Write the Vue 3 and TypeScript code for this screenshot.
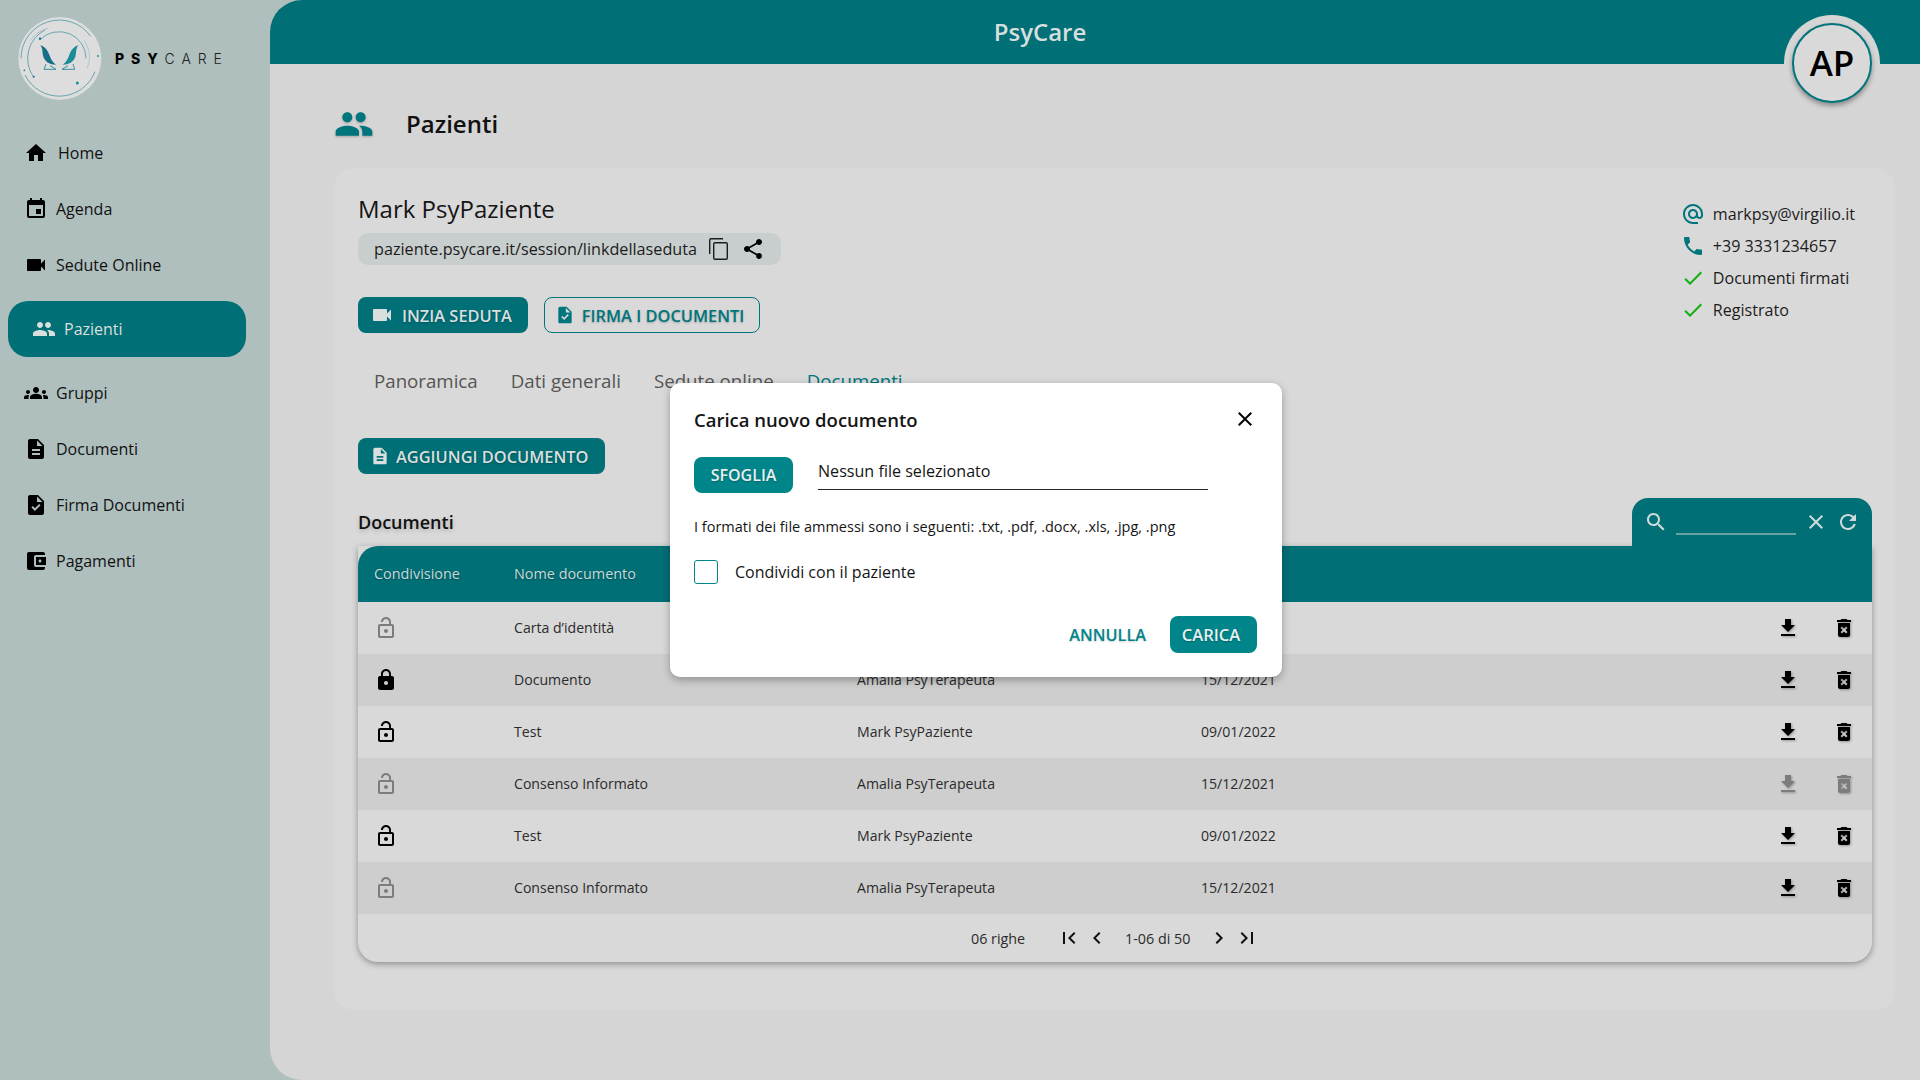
<script setup lang="ts">
const icons = {
  home: 'M10 20v-6h4v6h5v-8h3L12 3 2 12h3v8z',
  event: 'M17 12h-5v5h5v-5zM16 1v2H8V1H6v2H5c-1.11 0-1.99.9-1.99 2L3 19c0 1.1.89 2 2 2h14c1.1 0 2-.9 2-2V5c0-1.1-.9-2-2-2h-1V1h-2zm3 18H5V8h14v11z',
  video: 'M17 10.5V7c0-.55-.45-1-1-1H4c-.55 0-1 .45-1 1v10c0 .55.45 1 1 1h12c.55 0 1-.45 1-1v-3.5l4 4v-11l-4 4z',
  people: 'M16 11c1.66 0 2.99-1.34 2.99-3S17.66 5 16 5c-1.66 0-3 1.34-3 3s1.34 3 3 3zm-8 0c1.66 0 2.99-1.34 2.99-3S9.66 5 8 5C6.34 5 5 6.34 5 8s1.34 3 3 3zm0 2c-2.33 0-7 1.17-7 3.5V19h14v-2.5c0-2.33-4.67-3.5-7-3.5zm8 0c-.29 0-.62.02-.97.05 1.16.84 1.97 1.97 1.97 3.45V19h6v-2.5c0-2.33-4.67-3.5-7-3.5z',
  groups: 'M12 12.75c1.63 0 3.07.39 4.24.9 1.08.48 1.76 1.56 1.76 2.73V18H6v-1.61c0-1.18.68-2.26 1.76-2.73 1.17-.52 2.61-.91 4.24-.91zM4 13c1.1 0 2-.9 2-2s-.9-2-2-2-2 .9-2 2 .9 2 2 2zm1.13 1.1c-.37-.06-.74-.1-1.13-.1-.99 0-1.93.21-2.78.58C.48 14.9 0 15.62 0 16.43V18h4.5v-1.61c0-.83.23-1.61.63-2.29zM20 13c1.1 0 2-.9 2-2s-.9-2-2-2-2 .9-2 2 .9 2 2 2zm4 3.43c0-.81-.48-1.53-1.22-1.85-.85-.37-1.79-.58-2.78-.58-.39 0-.76.04-1.13.1.4.68.63 1.46.63 2.29V18H24v-1.57zM12 6c1.66 0 3 1.34 3 3s-1.34 3-3 3-3-1.34-3-3 1.34-3 3-3z',
  doc: 'M14 2H6c-1.1 0-1.99.9-1.99 2L4 20c0 1.1.89 2 1.99 2H18c1.1 0 2-.9 2-2V8l-6-6zm2 16H8v-2h8v2zm0-4H8v-2h8v2zm-3-5V3.5L18.5 9H13z',
  task: 'M14 2H6c-1.1 0-1.99.9-1.99 2L4 20c0 1.1.89 2 1.99 2H18c1.1 0 2-.9 2-2V8l-6-6zm-3.06 16L7.4 14.46l1.41-1.41 2.12 2.12 4.24-4.24 1.41 1.41L10.94 18zM13 9V3.5L18.5 9H13z',
  wallet: 'M21 18v1c0 1.1-.9 2-2 2H5c-1.11 0-2-.9-2-2V5c0-1.1.89-2 2-2h14c1.1 0 2 .9 2 2v1h-9c-1.11 0-2 .9-2 2v8c0 1.1.89 2 2 2h9zm-9-2h10V8H12v8zm4-2.5c-.83 0-1.5-.67-1.5-1.5s.67-1.5 1.5-1.5 1.5.67 1.5 1.5-.67 1.5-1.5 1.5z',
  copy: 'M16 1H4a2 2 0 0 0-2 2v14h1.4V3a.6.6 0 0 1 .6-.6h12zM19 5H8a2 2 0 0 0-2 2v14a2 2 0 0 0 2 2h11a2 2 0 0 0 2-2V7a2 2 0 0 0-2-2zm.6 16a.6.6 0 0 1-.6.6H8a.6.6 0 0 1-.6-.6V7a.6.6 0 0 1 .6-.6h11a.6.6 0 0 1 .6.6z',
  share: 'M18 16.08c-.76 0-1.44.3-1.96.77L8.91 12.7c.05-.23.09-.46.09-.7s-.04-.47-.09-.7l7.05-4.11c.54.5 1.25.81 2.04.81 1.66 0 3-1.34 3-3s-1.34-3-3-3-3 1.34-3 3c0 .24.04.47.09.7L8.04 9.81C7.5 9.31 6.79 9 6 9c-1.66 0-3 1.34-3 3s1.34 3 3 3c.79 0 1.5-.31 2.04-.81l7.12 4.16c-.05.21-.08.43-.08.65 0 1.61 1.31 2.92 2.92 2.92 1.61 0 2.92-1.31 2.92-2.92s-1.31-2.92-2.92-2.92z',
  at: 'M12 2C6.48 2 2 6.48 2 12s4.48 10 10 10h5v-2h-5c-4.34 0-8-3.66-8-8s3.66-8 8-8 8 3.66 8 8v1.43c0 .79-.71 1.57-1.5 1.57s-1.5-.78-1.5-1.57V12c0-2.76-2.24-5-5-5s-5 2.24-5 5 2.24 5 5 5c1.38 0 2.64-.56 3.54-1.47.65.89 1.77 1.47 2.96 1.47 1.97 0 3.5-1.6 3.5-3.57V12c0-5.52-4.48-10-10-10zm0 13c-1.66 0-3-1.34-3-3s1.34-3 3-3 3 1.34 3 3-1.34 3-3 3z',
  phone: 'M6.62 10.79c1.44 2.83 3.76 5.14 6.59 6.59l2.2-2.2c.27-.27.67-.36 1.02-.24 1.12.37 2.33.57 3.57.57.55 0 1 .45 1 1V20c0 .55-.45 1-1 1-9.39 0-17-7.61-17-17 0-.55.45-1 1-1h3.5c.55 0 1 .45 1 1 0 1.25.2 2.45.57 3.57.11.35.03.74-.25 1.02l-2.2 2.2z',
  check: 'M9 16.17 4.83 12l-1.42 1.41L9 19 21 7l-1.41-1.41z',
  lockOpen: 'M12 17c1.1 0 2-.9 2-2s-.9-2-2-2-2 .9-2 2 .9 2 2 2zm6-9h-1V6c0-2.76-2.24-5-5-5S7 3.24 7 6h1.9c0-1.71 1.39-3.1 3.1-3.1 1.71 0 3.1 1.39 3.1 3.1v2H6c-1.1 0-2 .9-2 2v10c0 1.1.9 2 2 2h12c1.1 0 2-.9 2-2V10c0-1.1-.9-2-2-2zm0 12H6V10h12v10z',
  lock: 'M18 8h-1V6c0-2.76-2.24-5-5-5S7 3.24 7 6v2H6c-1.1 0-2 .9-2 2v10c0 1.1.9 2 2 2h12c1.1 0 2-.9 2-2V10c0-1.1-.9-2-2-2zm-6 9c-1.1 0-2-.9-2-2s.9-2 2-2 2 .9 2 2-.9 2-2 2zm3.1-9H8.9V6c0-1.71 1.39-3.1 3.1-3.1 1.71 0 3.1 1.39 3.1 3.1v2z',
  download: 'M19 9h-4V3H9v6H5l7 7 7-7zM5 18v2h14v-2H5z',
  trash: 'M6 19c0 1.1.9 2 2 2h8c1.1 0 2-.9 2-2V7H6v12zm2.46-7.12 1.41-1.41L12 12.59l2.12-2.12 1.41 1.41L13.41 14l2.12 2.12-1.41 1.41L12 15.41l-2.12 2.12-1.41-1.41L10.59 14l-2.13-2.12zM15.5 4l-1-1h-5l-1 1H5v2h14V4z',
  search: 'M15.5 14h-.79l-.28-.27C15.41 12.59 16 11.11 16 9.5 16 5.91 13.09 3 9.5 3S3 5.91 3 9.5 5.91 16 9.5 16c1.61 0 3.09-.59 4.23-1.57l.27.28v.79l5 4.99L20.49 19l-4.99-5zm-6 0C7.01 14 5 11.99 5 9.5S7.01 5 9.5 5 14 7.01 14 9.5 11.99 14 9.5 14z',
  close: 'M19 6.41 17.59 5 12 10.59 6.41 5 5 6.41 10.59 12 5 17.59 6.41 19 12 13.41 17.59 19 19 17.59 13.41 12z',
  refresh: 'M17.65 6.35C16.2 4.9 14.21 4 12 4c-4.42 0-7.99 3.58-7.99 8s3.57 8 7.99 8c3.73 0 6.84-2.55 7.73-6h-2.08c-.82 2.33-3.04 4-5.65 4-3.31 0-6-2.69-6-6s2.69-6 6-6c1.66 0 3.14.69 4.22 1.78L13 11h7V4l-2.35 2.35z',
  first: 'M18.41 16.59 13.82 12l4.59-4.59L17 6l-6 6 6 6zM6 6h2v12H6z',
  prev: 'M15.41 7.41 14 6l-6 6 6 6 1.41-1.41L10.83 12z',
  next: 'M10 6 8.59 7.41 13.17 12l-4.58 4.59L10 18l6-6z',
  last: 'M5.59 7.41 10.18 12l-4.59 4.59L7 18l6-6-6-6zM16 6h2v12h-2z',
}

const navItems = [
  { label: 'Home', icon: icons.home },
  { label: 'Agenda', icon: icons.event },
  { label: 'Sedute Online', icon: icons.video },
  { label: 'Pazienti', icon: icons.people, active: true },
  { label: 'Gruppi', icon: icons.groups },
  { label: 'Documenti', icon: icons.doc },
  { label: 'Firma Documenti', icon: icons.task },
  { label: 'Pagamenti', icon: icons.wallet },
]

const contacts = [
  { text: 'markpsy@virgilio.it', icon: icons.at, ok: false },
  { text: '+39 3331234657', icon: icons.phone, ok: false },
  { text: 'Documenti firmati', icon: icons.check, ok: true },
  { text: 'Registrato', icon: icons.check, ok: true },
]

const tabs = ['Panoramica', 'Dati generali', 'Sedute online', 'Documenti']

const rows = [
  { name: 'Carta d’identità', owner: 'Amalia PsyTerapeuta', date: '15/12/2021', lock: 'open-off' },
  { name: 'Documento', owner: 'Amalia PsyTerapeuta', date: '15/12/2021', lock: 'closed' },
  { name: 'Test', owner: 'Mark PsyPaziente', date: '09/01/2022', lock: 'open' },
  { name: 'Consenso Informato', owner: 'Amalia PsyTerapeuta', date: '15/12/2021', lock: 'open-off', off: true },
  { name: 'Test', owner: 'Mark PsyPaziente', date: '09/01/2022', lock: 'open' },
  { name: 'Consenso Informato', owner: 'Amalia PsyTerapeuta', date: '15/12/2021', lock: 'open-off' },
]
</script>

<template>
  <div class="shell">
    <aside class="sidebar">
      <div class="brand">
        <svg class="brand-mark" viewBox="54 51 252 252">
          <circle cx="179.5" cy="175.5" r="124.5" fill="#dddddd" />
          <g fill="none" stroke="#2c8a9c" stroke-width="2">
            <path d="M63 175A115 115 0 0 1 272 109" />
            <path d="M75 225A115 115 0 0 0 285 215" />
            <path d="M135 90A96 96 0 0 0 100 230" />
            <path d="M122 118A80 80 0 0 1 258 175" />
            <path d="M252 120A92 92 0 0 1 262 205" stroke="#8fc0c4" />
            <path d="M90 122A102 102 0 0 1 145 84" stroke="#8fb4bc" />
          </g>
          <g fill="#156f88">
            <circle cx="120" cy="116" r="3.5" />
            <circle cx="73" cy="211" r="2.5" />
            <circle cx="101" cy="230" r="3" />
            <circle cx="232" cy="249" r="4.5" fill="#1a8d95" />
            <circle cx="294" cy="168" r="3" fill="#1a8d95" />
            <path d="M121 136C140 140 146 160 152 175C156 184 162 190 168 194C150 194 135 185 130 170C126 158 130 148 121 136Z" />
            <path d="M235 136C216 140 210 160 204 175C200 184 194 190 188 194C206 194 221 185 226 170C230 158 226 148 235 136Z" fill="#1a8d95" />
          </g>
          <g fill="none" stroke="#1a7f90" stroke-width="2.5">
            <path d="M138 192L132 208H168L150 197" />
            <path d="M219 192L224 208H186L204 197" />
          </g>
        </svg>
        <span class="brand-name"><b>PSY</b>CARE</span>
      </div>
      <nav class="nav">
        <a v-for="item in navItems" :key="item.label" class="nav-item" :class="{ active: item.active }">
          <svg class="ic" viewBox="0 0 24 24"><path :d="item.icon" /></svg>
          <span :class="{ wide: item.label === 'Home' }">{{ item.label }}</span>
        </a>
      </nav>
    </aside>

    <main class="main">
      <header class="topbar">PsyCare</header>
      <div class="avatar-notch">
        <div class="avatar">AP</div>
      </div>

      <div class="page-title">
        <svg class="title-icon" viewBox="0 0 24 24"><path :d="icons.people" /></svg>
        <h1>Pazienti</h1>
      </div>

      <section class="card">
        <div class="patient">
          <div>
            <h2>Mark PsyPaziente</h2>
            <div class="link-pill">
              <span>paziente.psycare.it/session/linkdellaseduta</span>
              <svg class="ic" viewBox="0 0 24 24"><path fill-rule="evenodd" :d="icons.copy" /></svg>
              <svg class="ic" viewBox="0 0 24 24"><path :d="icons.share" /></svg>
            </div>
            <div class="actions">
              <button class="btn solid" type="button">
                <svg class="ic" viewBox="0 0 24 24"><path :d="icons.video" /></svg>
                INZIA SEDUTA
              </button>
              <button class="btn outline" type="button">
                <svg class="ic small" viewBox="0 0 24 24"><path :d="icons.task" /></svg>
                FIRMA I DOCUMENTI
              </button>
            </div>
          </div>
          <ul class="contacts">
            <li v-for="c in contacts" :key="c.text">
              <svg class="ic" :class="c.ok ? 'green' : 'teal'" viewBox="0 0 24 24"><path :d="c.icon" /></svg>
              {{ c.text }}
            </li>
          </ul>
        </div>

        <div class="tabs">
          <span v-for="tab in tabs" :key="tab" :class="{ current: tab === 'Documenti' }">{{ tab }}</span>
        </div>

        <button class="btn solid add" type="button">
          <svg class="ic small" viewBox="0 0 24 24"><path :d="icons.doc" /></svg>
          AGGIUNGI DOCUMENTO
        </button>

        <div class="table-head">
          <h3>Documenti</h3>
          <div class="search">
            <svg class="ic" viewBox="0 0 24 24"><path :d="icons.search" /></svg>
            <span class="search-line"></span>
            <svg class="ic" viewBox="0 0 24 24"><path :d="icons.close" /></svg>
            <svg class="ic" viewBox="0 0 24 24"><path :d="icons.refresh" /></svg>
          </div>
        </div>

        <div class="table">
          <div class="row head">
            <span>Condivisione</span>
            <span>Nome documento</span>
            <span>Caricato da</span>
            <span>Data</span>
          </div>
          <div v-for="(row, i) in rows" :key="i" class="row" :class="{ alt: i % 2 === 1 }">
            <svg class="ic" :class="{ faded: row.lock === 'open-off' }" viewBox="0 0 24 24">
              <path :d="row.lock === 'closed' ? icons.lock : icons.lockOpen" />
            </svg>
            <span>{{ row.name }}</span>
            <span>{{ row.owner }}</span>
            <span>{{ row.date }}</span>
            <svg class="ic act" :class="{ faded: row.off }" viewBox="0 0 24 24"><path :d="icons.download" /></svg>
            <svg class="ic act" :class="{ faded: row.off }" viewBox="0 0 24 24"><path :d="icons.trash" /></svg>
          </div>
          <div class="pager">
            <span class="count">06 righe</span>
            <svg class="ic" viewBox="0 0 24 24"><path :d="icons.first" /></svg>
            <svg class="ic" viewBox="0 0 24 24"><path :d="icons.prev" /></svg>
            <span class="range">1-06 di 50</span>
            <svg class="ic" viewBox="0 0 24 24"><path :d="icons.next" /></svg>
            <svg class="ic" viewBox="0 0 24 24"><path :d="icons.last" /></svg>
          </div>
        </div>
      </section>
    </main>

    <div class="modal">
      <div class="modal-title">
        <h4>Carica nuovo documento</h4>
        <svg class="ic" viewBox="0 0 24 24"><path :d="icons.close" /></svg>
      </div>
      <div class="file-row">
        <button class="modal-btn" type="button">SFOGLIA</button>
        <div class="file-name">Nessun file selezionato</div>
      </div>
      <p class="formats">I formati dei file ammessi sono i seguenti: .txt, .pdf, .docx, .xls, .jpg, .png</p>
      <label class="share-check">
        <span class="box"></span>
        Condividi con il paziente
      </label>
      <div class="modal-actions">
        <button class="ghost" type="button">ANNULLA</button>
        <button class="modal-btn" type="button">CARICA</button>
      </div>
    </div>
  </div>
</template>

<style>
html,
body {
  margin: 0;
  background: #afbfbd;
  overflow: hidden;
}
</style>

<style scoped>
.shell {
  display: flex;
  width: 1920px;
  height: 1080px;
  font-family: 'Open Sans', 'Noto Sans', sans-serif;
  color: #1c1c1c;
  background: #afbfbd;
}

.ic {
  display: block;
  flex: none;
  width: 24px;
  height: 24px;
  fill: currentColor;
}

.ic.small {
  width: 20px;
  height: 20px;
}

.ic.teal {
  color: #00757c;
}

.ic.green {
  color: #0fae0f;
}

/* sidebar */
.sidebar {
  flex: none;
  width: 270px;
}

.brand {
  display: flex;
  align-items: center;
  gap: 13px;
  height: 125px;
  padding: 0 0 8px 18px;
  box-sizing: border-box;
}

.brand-mark {
  width: 84px;
  height: 84px;
}

.brand-name {
  font-family: Inter, 'Open Sans', sans-serif;
  font-size: 14px;
  font-weight: 300;
  letter-spacing: 6.9px;
  color: #222;
}

.brand-name b {
  font-weight: 800;
  color: #000;
}

.nav {
  display: flex;
  flex-direction: column;
}

.nav-item {
  display: flex;
  align-items: center;
  gap: 8px;
  height: 56px;
  padding-left: 24px;
  font-size: 16px;
  color: #111;
}

.nav-item .ic {
  color: #000;
}

.nav-item .wide {
  margin-left: 2px;
}

.nav-item.active {
  width: 238px;
  margin: 8px 0 8px 8px;
  padding-left: 24px;
  box-sizing: border-box;
  border-radius: 20px;
  background: #006f76;
  color: #d9dfdf;
}

.nav-item.active .ic {
  color: #d9dfdf;
}

/* main */
.main {
  position: relative;
  flex: 1;
  min-width: 0;
  border-radius: 32px 0 0 32px;
  background: #d5d5d5;
  overflow: hidden;
}

.topbar {
  height: 64px;
  padding-right: 110px;
  background: #006f76;
  color: #d6dfdf;
  font-size: 24px;
  font-weight: 600;
  line-height: 64px;
  text-align: center;
}

.avatar-notch {
  position: absolute;
  top: 15px;
  right: 40px;
  display: flex;
  justify-content: center;
  align-items: center;
  width: 96px;
  height: 96px;
  border-radius: 50%;
  background: #d5d5d5;
}

.avatar {
  display: flex;
  justify-content: center;
  align-items: center;
  width: 80px;
  height: 80px;
  box-sizing: border-box;
  padding-bottom: 2px;
  border: 2px solid #00757c;
  border-radius: 50%;
  background: #d9d9d9;
  box-shadow: 0 3px 5px rgba(0, 0, 0, 0.35);
  color: #000;
  font-size: 35px;
  font-weight: 600;
}

.page-title {
  display: flex;
  align-items: center;
  gap: 32px;
  height: 34px;
  margin: 43px 0 27px 64px;
}

.title-icon {
  width: 40px;
  height: 40px;
  fill: #00757c;
  filter: drop-shadow(0 1px 1px rgba(0, 0, 0, 0.25));
}

.page-title h1 {
  margin: 0 0 2px;
  font-size: 24px;
  font-weight: 600;
  color: #111;
}

.card {
  margin: 0 25px 0 64px;
  padding: 24px 23px 48px 24px;
  border-radius: 20px;
  background: #d9d9d9;
}

.patient {
  display: flex;
  justify-content: space-between;
  padding-right: 17px;
}

.patient h2 {
  margin: 0 0 7px;
  font-size: 24px;
  font-weight: 400;
  line-height: 34px;
  color: #151515;
}

.link-pill {
  display: flex;
  align-items: center;
  width: 423px;
  height: 32px;
  box-sizing: border-box;
  padding-left: 16px;
  border-radius: 10px;
  background: #c8cecd;
  font-size: 16.2px;
}

.link-pill .ic:first-of-type {
  margin-left: 10px;
}

.link-pill .ic:last-of-type {
  margin-left: 10px;
  color: #000;
}

.actions {
  display: flex;
  gap: 16px;
  margin-top: 32px;
}

.btn {
  display: flex;
  align-items: center;
  gap: 8px;
  height: 36px;
  box-sizing: border-box;
  padding: 0 16px 0 12px;
  border: 0;
  border-radius: 8px;
  font-family: inherit;
  font-size: 16.4px;
  font-weight: 600;
  text-shadow: 0 1px 2px rgba(0, 0, 0, 0.25);
}

.btn.solid {
  background: #006f76;
  color: #d9dfdf;
}

.btn.outline {
  gap: 7px;
  padding: 0 15px 0 10px;
  border: 1px solid #00757c;
  background: none;
  color: #00757c;
}

.contacts {
  margin: 6px 0 0;
  padding: 0;
  list-style: none;
  font-size: 16.1px;
}

.contacts li {
  display: flex;
  align-items: center;
  gap: 8px;
  height: 32px;
}

.tabs {
  display: flex;
  gap: 33px;
  margin-top: 36px;
  padding-left: 16px;
  font-size: 18.7px;
  line-height: 24px;
  color: #555;
}

.tabs .current {
  color: #00757c;
}

.btn.add {
  gap: 6px;
  margin-top: 45px;
}

.table-head {
  display: flex;
  justify-content: space-between;
  align-items: center;
  margin-top: 24px;
}

.table-head h3 {
  margin: 0;
  font-size: 18px;
  font-weight: 600;
  color: #111;
  text-shadow: 0 2px 4px rgba(0, 0, 0, 0.2);
}

.search {
  display: flex;
  align-items: center;
  gap: 8px;
  width: 240px;
  height: 48px;
  box-sizing: border-box;
  padding-left: 12px;
  border-radius: 16px 16px 0 0;
  background: #006f76;
  color: #d0dcdc;
}

.search-line {
  width: 120px;
  height: 2px;
  margin-top: 24px;
  background: #6aa3a6;
}

.table {
  border-radius: 0 0 20px 20px;
  background: #d9d9d9;
  box-shadow: 0 2px 6px rgba(0, 0, 0, 0.35);
}

.row {
  display: grid;
  grid-template-columns: 156px 343px 344px 1fr 56px 56px;
  align-items: center;
  height: 52px;
  font-size: 14.1px;
  color: #2b2b2b;
}

.row > :first-child {
  margin-left: 16px;
}

.row > span {
  margin-bottom: 1px;
}

.row .ic {
  color: #000;
}

.row .ic.faded {
  color: #7c7c7c;
}

.row.alt {
  background: #cecece;
}

.row .act {
  justify-self: center;
  filter: drop-shadow(1px 1px 1px rgba(0, 0, 0, 0.3));
}

.row.head {
  height: 56px;
  border-radius: 20px 0 0 0;
  background: #006f76;
  color: #c9d8d8;
  font-size: 14.4px;
  text-shadow: 0 1px 2px rgba(0, 0, 0, 0.3);
}

.pager {
  display: flex;
  align-items: center;
  height: 48px;
  padding-left: 613px;
  font-size: 14.3px;
  color: #2b2b2b;
}

.pager .ic {
  color: #111;
}

.pager .count {
  margin-right: 32px;
}

.pager .ic + .ic {
  margin-left: 4px;
}

.pager .range {
  margin: 0 17px 0 16px;
}

/* upload dialog */
.modal {
  position: absolute;
  top: 383px;
  left: 670px;
  width: 612px;
  height: 294px;
  box-sizing: border-box;
  padding: 23px 25px 24px 24px;
  border-radius: 10px;
  background: #fff;
  box-shadow: 0 3px 8px rgba(0, 0, 0, 0.3);
  color: #151515;
}

.modal-title {
  display: flex;
  justify-content: space-between;
  align-items: center;
  height: 26px;
}

.modal-title h4 {
  margin: 0;
  font-size: 18.5px;
  font-weight: 600;
}

.modal-title .ic {
  color: #000;
}

.file-row {
  display: flex;
  gap: 25px;
  margin-top: 25px;
}

.modal-btn {
  height: 36px;
  padding: 0 12px;
  border: 0;
  border-radius: 8px;
  background: #00868a;
  color: #e8f0f0;
  font-family: inherit;
  font-size: 16px;
  font-weight: 600;
  text-shadow: 0 1px 2px rgba(0, 0, 0, 0.25);
}

.file-row .modal-btn {
  width: 99px;
}

.file-name {
  width: 390px;
  height: 33px;
  box-sizing: border-box;
  border-bottom: 1px solid #222;
  font-size: 16.1px;
  line-height: 28px;
}

.formats {
  margin: 24px 0 0;
  font-size: 14.5px;
  line-height: 20px;
}

.share-check {
  display: flex;
  align-items: center;
  gap: 17px;
  height: 24px;
  margin-top: 23px;
  font-size: 16px;
}

.box {
  width: 24px;
  height: 24px;
  box-sizing: border-box;
  border: 1px solid #00868a;
  border-radius: 3px;
}

.modal-actions {
  display: flex;
  justify-content: flex-end;
  align-items: center;
  gap: 24px;
  margin-top: 32px;
}

.modal-actions .modal-btn {
  width: 87px;
  height: 37px;
  padding: 0 5px 0 0;
  font-size: 16.6px;
}

.ghost {
  padding: 0;
  border: 0;
  background: none;
  color: #00868a;
  font-family: inherit;
  font-size: 16.3px;
  font-weight: 600;
  text-shadow: 0 1px 2px rgba(0, 0, 0, 0.2);
}
</style>
